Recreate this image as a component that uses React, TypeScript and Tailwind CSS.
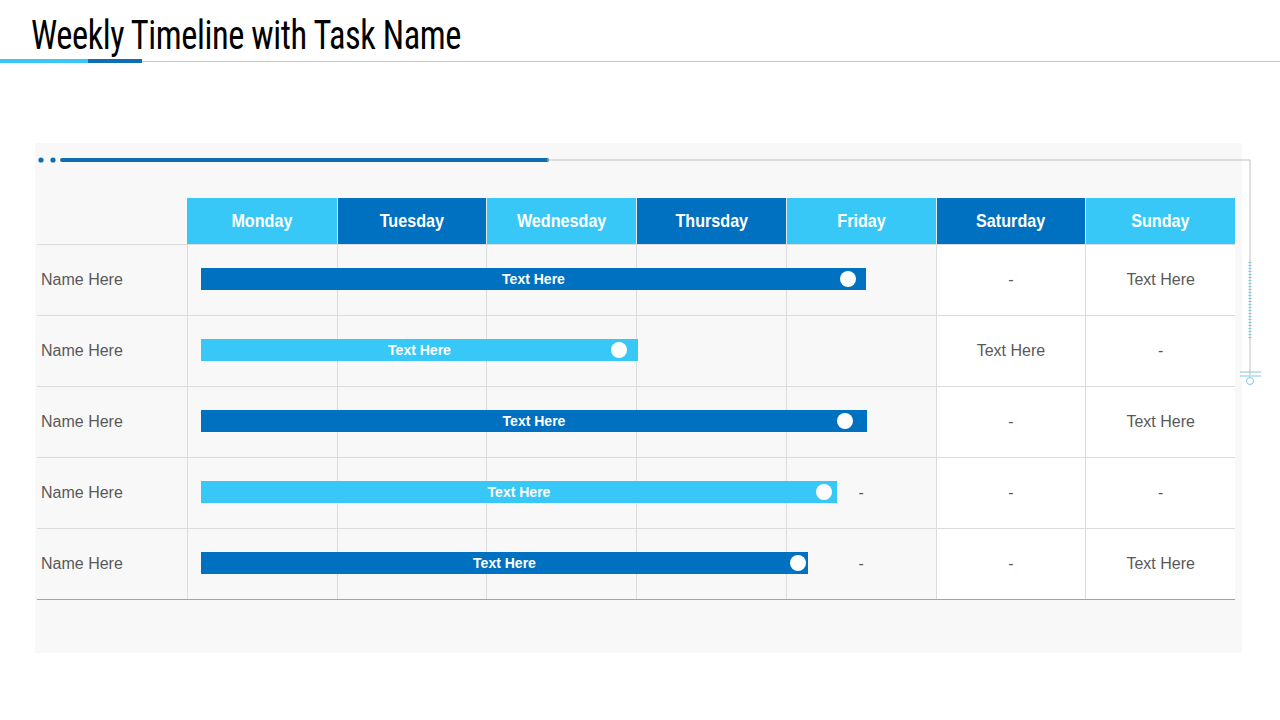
import React from "react";

const days = ["Monday","Tuesday","Wednesday","Thursday","Friday","Saturday","Sunday"];
const rows = [
  { bar: [201, 866], dark: true, circle: 848, sat: "-", sun: "Text Here", fri: "" },
  { bar: [201, 638], dark: false, circle: 619, sat: "Text Here", sun: "-", fri: "" },
  { bar: [201, 867], dark: true, circle: 845, sat: "-", sun: "Text Here", fri: "" },
  { bar: [201, 837], dark: false, circle: 824, sat: "-", sun: "-", fri: "-" },
  { bar: [201, 808], dark: true, circle: 798, sat: "-", sun: "Text Here", fri: "-" },
];

export default function App() {
  return (
    <div className="relative w-[1280px] h-[720px] bg-white overflow-hidden" style={{ fontFamily: "'Liberation Sans', Arial, sans-serif" }}>
      <div className="h-[61px] pl-[31px] pt-[12px]">
        <h1 className="text-[40px] leading-[48px] text-black tracking-[-0.5px]" style={{ fontFamily: "'Liberation Sans Narrow', 'Roboto Condensed', 'Liberation Sans', sans-serif", transform: "scaleX(0.86)", transformOrigin: "left" }}>Weekly Timeline with Task Name</h1>
      </div>
      <div className="flex h-[1px] bg-[#c8c8c8]" />
      <div className="absolute left-0 top-[59px] flex h-[4px]">
        <div className="w-[88px] bg-[#38c8f8]" />
        <div className="w-[54px] bg-[#0e6db3]" />
      </div>

      <div className="relative ml-[35px] mt-[81px] w-[1207px] h-[510px] bg-[#f8f8f8]">
        <svg className="absolute left-0 top-0" width="1245" height="250">
          <circle cx="6" cy="17" r="2.6" fill="#0e6db3" />
          <circle cx="18" cy="17" r="2.6" fill="#0e6db3" />
          <line x1="27" y1="17" x2="512" y2="17" stroke="#0e6db3" strokeWidth="4" strokeLinecap="round" />
          <polyline points="512,17 1215,17 1215,232" fill="none" stroke="#bfbfbf" strokeWidth="1" />
          <line x1="1215" y1="119" x2="1215" y2="195" stroke="#7fc9e0" strokeWidth="3" strokeDasharray="1 2" />
          <line x1="1205" y1="229" x2="1226" y2="229" stroke="#7fc9e0" strokeWidth="1" />
          <line x1="1205" y1="233" x2="1226" y2="233" stroke="#7fc9e0" strokeWidth="1" />
          <circle cx="1215" cy="238" r="3.5" fill="none" stroke="#7fc9e0" strokeWidth="1" />
        </svg>

        <div className="absolute left-[2px] top-[55px] w-[1198px]">
          <div className="flex h-[47px] border-b border-[#dcdcdc]">
            <div className="w-[150px]" />
            {days.map((d, i) => (
              <div key={d} className={`w-[150px] flex items-center justify-center text-white text-[19px] font-bold ${i % 2 ? "bg-[#0070c0]" : "bg-[#38c8f8]"} ${i ? "border-l border-[#e8e8e8]" : ""}`} style={{ fontFamily: "'Liberation Sans Narrow', 'Liberation Sans', sans-serif", }}>
                <span style={{ transform: "scaleX(0.85)", display: "inline-block" }}>{d}</span>
              </div>
            ))}
          </div>
          {rows.map((r, ri) => (
            <div key={ri} className={`relative flex h-[71px] ${ri < 4 ? "border-b border-[#dcdcdc]" : "border-b border-[#38c8f8]"}`}>
              <div className="w-[150px] flex items-center pl-[4px] text-[16px] text-[#595959]">Name Here</div>
              {days.map((d, i) => {
                const txt = i === 4 ? r.fri : i === 5 ? r.sat : i === 6 ? r.sun : "";
                return (
                  <div key={d} className={`w-[150px] border-l border-[#dcdcdc] flex items-center justify-center text-[16px] text-[#595959] ${i >= 5 ? "bg-white" : ""}`}>{txt}</div>
                );
              })}
              <div className={`absolute top-[23px] h-[22px] flex items-center justify-center text-white text-[14px] font-bold ${r.dark ? "bg-[#0070c0]" : "bg-[#38c8f8]"}`} style={{ left: r.bar[0] - 37, width: r.bar[1] - r.bar[0] }}>
                Text Here
                <span className="absolute top-[3px] w-[16px] h-[16px] rounded-full bg-white" style={{ left: r.circle - r.bar[0] - 8 }} />
              </div>
            </div>
          ))}
        </div>
      </div>
    </div>
  );
}
